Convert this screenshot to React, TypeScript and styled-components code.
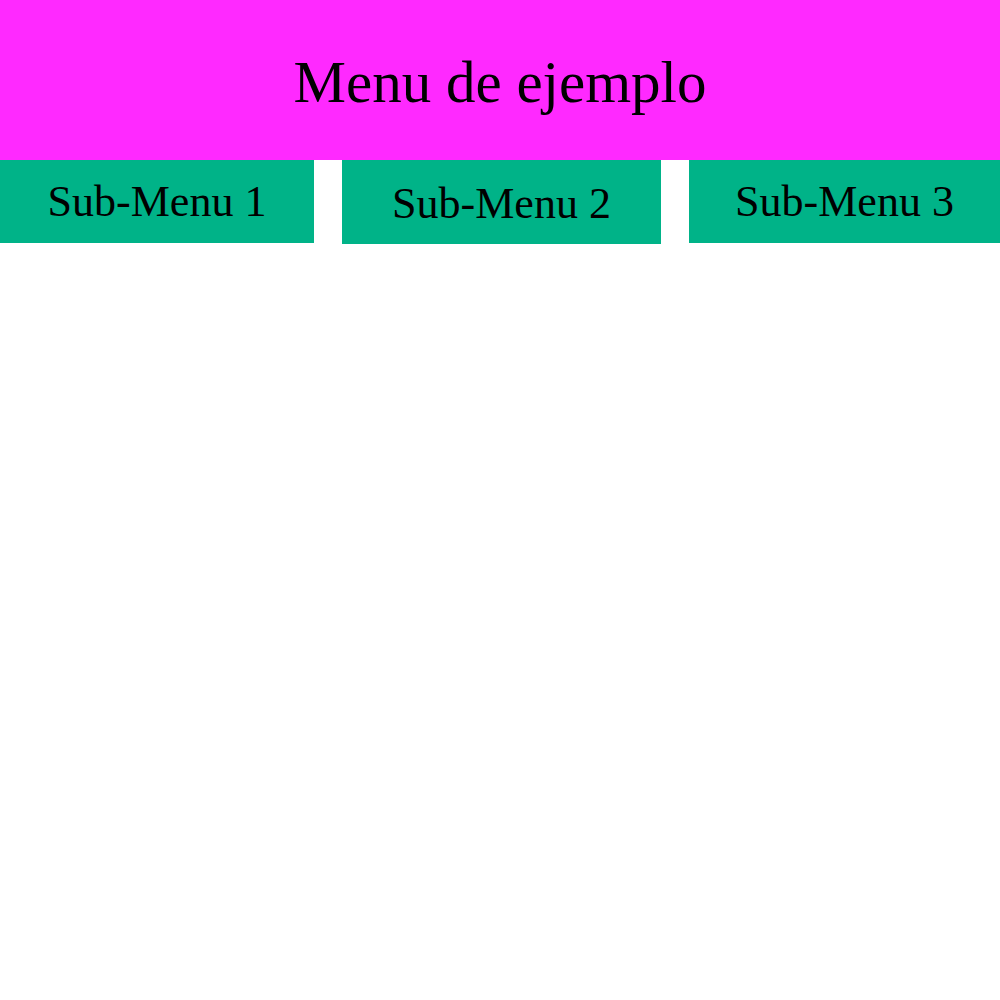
import React from "react";
import styled, { createGlobalStyle } from "styled-components";

const Global = createGlobalStyle`
  html, body { margin: 0; padding: 0; background: #ffffff; }
  body { font-family: "Liberation Serif", "Times New Roman", serif; color: #000; }
`;

const Page = styled.div`
  width: 1000px;
  display: flex;
  flex-direction: column;
`;

const Header = styled.header`
  height: 160px;
  background: #ff29ff;
  display: flex;
  align-items: center;
  justify-content: center;
  box-sizing: border-box;
  padding-top: 4px;
`;

const Title = styled.h1`
  margin: 0;
  font-size: 59px;
  font-weight: 400;
  line-height: normal;
`;

const SubBar = styled.nav`
  display: flex;
  justify-content: space-between;
  align-items: flex-start;
`;

const SubItem = styled.div<{ $w: number; $h: number; $shift: number }>`
  width: ${(p) => p.$w}px;
  height: ${(p) => p.$h}px;
  background: #00b388;
  display: flex;
  align-items: center;
  justify-content: center;
  box-sizing: border-box;
  padding-top: ${(p) => p.$shift}px;
  font-size: 44px;
  line-height: normal;
`;

const items = [
  { label: "Sub-Menu 1", w: 314, h: 83, shift: 0 },
  { label: "Sub-Menu 2", w: 319, h: 84, shift: 3 },
  { label: "Sub-Menu 3", w: 311, h: 83, shift: 0 },
];

export default function App() {
  return (
    <>
      <Global />
      <Page>
        <Header>
          <Title>Menu de ejemplo</Title>
        </Header>
        <SubBar>
          {items.map((it) => (
            <SubItem key={it.label} $w={it.w} $h={it.h} $shift={it.shift}>
              {it.label}
            </SubItem>
          ))}
        </SubBar>
      </Page>
    </>
  );
}
